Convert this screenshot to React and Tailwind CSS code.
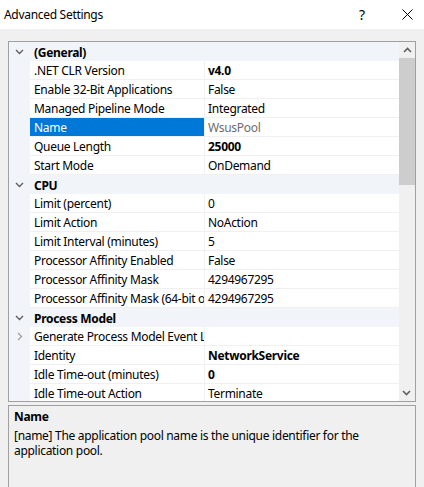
import React from "react";

const rows = [
  { h: "(General)" },
  { n: ".NET CLR Version", v: "v4.0", b: true },
  { n: "Enable 32-Bit Applications", v: "False" },
  { n: "Managed Pipeline Mode", v: "Integrated" },
  { n: "Name", v: "WsusPool", sel: true },
  { n: "Queue Length", v: "25000", b: true },
  { n: "Start Mode", v: "OnDemand" },
  { h: "CPU" },
  { n: "Limit (percent)", v: "0" },
  { n: "Limit Action", v: "NoAction" },
  { n: "Limit Interval (minutes)", v: "5" },
  { n: "Processor Affinity Enabled", v: "False" },
  { n: "Processor Affinity Mask", v: "4294967295" },
  { n: "Processor Affinity Mask (64-bit option)", v: "4294967295" },
  { h: "Process Model" },
  { n: "Generate Process Model Event Log Entry", v: "", exp: true },
  { n: "Identity", v: "NetworkService", b: true },
  { n: "Idle Time-out (minutes)", v: "0", b: true },
  { n: "Idle Time-out Action", v: "Terminate" },
];

function ChevDown({ color = "#5f5f5f" }) {
  return (
    <svg width="9" height="6" viewBox="0 0 9 6">
      <path d="M1 1 L4.5 4.5 L8 1" fill="none" stroke={color} strokeWidth="1.4" />
    </svg>
  );
}
function ChevRight() {
  return (
    <svg width="6" height="9" viewBox="0 0 6 9">
      <path d="M1 1 L4.5 4.5 L1 8" fill="none" stroke="#a0a0a0" strokeWidth="1.3" />
    </svg>
  );
}
function ChevUp({ color = "#606060" }) {
  return (
    <svg width="9" height="6" viewBox="0 0 9 6">
      <path d="M1 5 L4.5 1.5 L8 5" fill="none" stroke={color} strokeWidth="1.6" />
    </svg>
  );
}

export default function App() {
  return (
    <div
      className="w-[424px] h-[487px] bg-[#f0f0f0] overflow-hidden text-[12px] tracking-[-0.3px] text-black"
      style={{ fontFamily: '"Noto Sans", "Open Sans", sans-serif' }}
    >
      {/* title bar */}
      <div className="h-[29px] bg-white flex items-center pl-[4px]">
        <span className="text-[12px]">Advanced Settings</span>
        <div className="ml-auto flex items-center">
          <span className="w-[56px] text-center text-[14px] leading-none">?</span>
          <span className="w-[34px] flex justify-center">
            <svg width="11" height="11" viewBox="0 0 11 11">
              <path d="M0.5 0.5 L10.5 10.5 M10.5 0.5 L0.5 10.5" stroke="#000" strokeWidth="1" />
            </svg>
          </span>
        </div>
      </div>

      <div className="px-[8px] pt-[12px]">
        {/* property grid */}
        <div className="h-[361px] border border-[#a0a0a0] flex bg-white">
          <div className="flex-1 overflow-hidden flex flex-col">
            {rows.map((r, i) =>
              r.h ? (
                <div key={i} className="h-[19px] shrink-0 flex bg-[#f1f4f9]">
                  <div className="w-[21px] flex items-center justify-center">
                    <ChevDown />
                  </div>
                  <div className="pl-[4px] pt-[2px] flex items-center font-bold">{r.h}</div>
                </div>
              ) : (
                <div key={i} className="h-[19px] shrink-0 flex">
                  <div className="w-[21px] bg-[#f1f4f9] flex items-center justify-center">
                    {r.exp && <ChevRight />}
                  </div>
                  <div
                    className={
                      "w-[174px] shrink-0 pl-[4px] pt-[2px] flex items-center whitespace-nowrap overflow-hidden border-b border-[#f0f0f0] " +
                      (r.sel ? "bg-[#0078d7] text-white" : "")
                    }
                  >
                    {r.n}
                  </div>
                  <div
                    className={
                      "flex-1 pl-[3px] pt-[2px] flex items-center whitespace-nowrap overflow-hidden border-b border-l border-[#f0f0f0] " +
                      (r.b ? "font-bold " : "") +
                      (r.sel ? "text-[#6d6d6d]" : "")
                    }
                  >
                    {r.v}
                  </div>
                </div>
              )
            )}
          </div>
          {/* scrollbar */}
          <div className="w-[16px] bg-[#f0f0f0] flex flex-col">
            <div className="h-[16px] flex items-center justify-center">
              <ChevUp />
            </div>
            <div className="h-[127px] bg-[#cdcdcd]" />
            <div className="flex-1" />
            <div className="h-[16px] flex items-center justify-center rotate-180">
              <ChevUp />
            </div>
          </div>
        </div>

        {/* description */}
        <div className="mt-[3px] h-[100px] border border-[#a0a0a0] bg-[#f0f0f0] px-[5px] pt-[3px]">
          <div className="font-bold leading-[16px]">Name</div>
          <div className="mt-[3px] leading-[15px] pr-[8px]">
            [name] The application pool name is the unique identifier for the application pool.
          </div>
        </div>
      </div>
    </div>
  );
}
